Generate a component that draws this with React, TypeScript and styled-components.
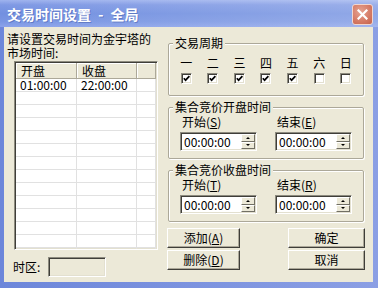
import React from 'react';
import styled, { createGlobalStyle } from 'styled-components';

const GlobalStyle = createGlobalStyle`
  html, body { margin: 0; padding: 0; }
  body {
    font-family: "Noto Sans CJK SC", "Noto Sans", sans-serif;
    font-size: 12px;
    color: #000;
    background: #7f95dc;
  }
  * { box-sizing: border-box; }
`;

const Window = styled.div`
  width: 378px;
  height: 288px;
  display: flex;
  flex-direction: column;
  overflow: hidden;
  background: linear-gradient(to right, #6c86da, #8b9fe4);
`;

const TitleBar = styled.div`
  height: 27px;
  flex: none;
  display: flex;
  align-items: center;
  justify-content: space-between;
  padding: 0 5px 0 7px;
  background:
    linear-gradient(to right, rgba(255, 255, 255, 0) 0%, rgba(255, 255, 255, 0.22) 100%),
    linear-gradient(to bottom, #9fb3ee 0%, #7f99e4 18%, #7290e0 50%, #7a96e3 80%, #8ba3ea 100%);
`;

const Title = styled.span`
  color: #fff;
  font-size: 14px;
  font-weight: 700;
  line-height: 16px;
  word-spacing: 4px;
  text-shadow: 1px 1px 0 rgba(40, 60, 140, 0.35);
`;

const CloseButton = styled.div`
  width: 21px;
  height: 21px;
  margin-top: 2px;
  border-radius: 3px;
  border: 1px solid #f1d6cf;
  background: radial-gradient(circle at 40% 35%, #e6a493 0%, #d57a65 60%, #c4624c 100%);
  display: flex;
  align-items: center;
  justify-content: center;
`;

const Body = styled.div`
  flex: 1;
  margin: 0 5px 6px 4px;
  background: #ece9d8;
  display: flex;
`;

const LeftPane = styled.div`
  width: 163px;
  flex: none;
  padding: 5px 0 0 3px;
  display: flex;
  flex-direction: column;
`;

const Prompt = styled.div`
  line-height: 14px;
  white-space: nowrap;
`;

const ListView = styled.div`
  margin: 1px 0 0 7px;
  width: 144px;
  height: 189px;
  padding: 1px;
  border: 1px solid;
  border-color: #8d8b7f #fff #fff #8d8b7f;
  box-shadow: inset 1px 1px 0 #3f3e39, inset -1px -1px 0 #e3e0d0;
  background: #fff;
  display: flex;
  flex-direction: column;
  overflow: hidden;
`;

const HeaderRow = styled.div`
  display: flex;
  height: 16px;
  flex: none;
  background: #ece9d8;
`;

const HeaderCell = styled.div<{ $w?: number }>`
  ${(p) => (p.$w ? `width: ${p.$w}px; flex: none;` : 'flex: 1;')}
  padding-left: 5px;
  line-height: 15px;
  border-right: 1px solid #aca899;
  border-bottom: 1px solid #aca899;
  box-shadow: inset 1px 1px 0 #fff;
`;

const Row = styled.div`
  display: flex;
  height: 13px;
  flex: none;
  border-bottom: 1px solid #e1e1e1;
`;

const Cell = styled.div<{ $w?: number }>`
  ${(p) => (p.$w ? `width: ${p.$w}px; flex: none;` : 'flex: 1;')}
  padding-left: 4px;
  line-height: 12px;
  border-right: 1px solid #e1e1e1;
  white-space: nowrap;
`;

const ZoneRow = styled.div`
  display: flex;
  align-items: center;
  margin: 7px 0 0 6px;
  gap: 8px;
`;

const ZoneLabel = styled.span`
  line-height: 14px;
`;

const ZoneInput = styled.div`
  width: 58px;
  height: 20px;
  border: 1px solid;
  border-color: #8d8b7f #fff #fff #8d8b7f;
  box-shadow: inset 1px 1px 0 #3f3e39, inset -1px -1px 0 #e3e0d0;
  background: #ece9d8;
`;

const RightPane = styled.div`
  flex: 1;
  padding-top: 10px;
  display: flex;
  flex-direction: column;
  gap: 5px;
`;

const Group = styled.fieldset<{ $pt: number; $pb: number }>`
  margin: 0 0 0 1px;
  width: 196px;
  min-width: 0;
  padding: ${(p) => p.$pt}px 4px ${(p) => p.$pb}px;
  border: 1px solid #aca899;
  border-radius: 2px;
  box-shadow: inset 1px 1px 0 #fff, 1px 1px 0 #fff;
`;

const Legend = styled.legend`
  padding: 0 2px;
  margin: 0;
  font-size: 12px;
  line-height: 12px;
  background: #ece9d8;
`;

const DaysGrid = styled.div`
  display: grid;
  grid-template-columns: repeat(7, 1fr);
`;

const Day = styled.div`
  display: flex;
  flex-direction: column;
  align-items: center;
  gap: 3px;
`;

const DayLabel = styled.span`
  line-height: 14px;
`;

const CheckBox = styled.div`
  width: 11px;
  height: 11px;
  border: 1px solid;
  border-color: #8d8b7f #fff #fff #8d8b7f;
  box-shadow: inset 1px 1px 0 #3f3e39, inset -1px -1px 0 #e3e0d0;
  background: #fff;
  display: flex;
  align-items: center;
  justify-content: center;
`;

const TimeRow = styled.div`
  display: grid;
  grid-template-columns: 77px 77px;
  column-gap: 18px;
  padding-left: 7px;
`;

const TimeCol = styled.div`
  display: flex;
  flex-direction: column;
  gap: 3px;
`;

const FieldLabel = styled.span`
  padding-left: 2px;
  line-height: 14px;
  white-space: nowrap;
`;

const TimeInput = styled.div`
  height: 19px;
  display: flex;
  padding: 1px;
  border: 1px solid;
  border-color: #8d8b7f #fff #fff #8d8b7f;
  box-shadow: inset 1px 1px 0 #3f3e39, inset -1px -1px 0 #e3e0d0;
  background: #fff;
`;

const TimeText = styled.span`
  flex: 1;
  padding-left: 2px;
  line-height: 15px;
`;

const Spinner = styled.div`
  width: 14px;
  display: flex;
  flex-direction: column;
`;

const SpinButton = styled.div<{ $down?: boolean }>`
  flex: 1;
  background: #ece9d8;
  border: 1px solid;
  border-color: #fff #716f64 #716f64 #fff;
  display: flex;
  align-items: center;
  justify-content: center;
  &::after {
    content: '';
    width: 0;
    height: 0;
    border-left: 2px solid transparent;
    border-right: 2px solid transparent;
    ${(p) => (p.$down ? 'border-top: 2px solid #000;' : 'border-bottom: 2px solid #000;')}
  }
`;

const ButtonGrid = styled.div`
  margin-top: 1px;
  display: grid;
  grid-template-columns: 73px 77px;
  justify-content: space-between;
  width: 198px;
  row-gap: 2px;
`;

const Button = styled.div`
  height: 20px;
  display: flex;
  align-items: center;
  justify-content: center;
  background: #ece9d8;
  border: 1px solid;
  border-color: #fff #3f3e39 #3f3e39 #fff;
  box-shadow: inset -1px -1px 0 #aca899;
  line-height: 14px;
  white-space: nowrap;
`;

const Mnemonic = styled.u`
  text-decoration: underline;
  text-underline-offset: 1px;
`;

const days: { label: string; checked: boolean }[] = [
  { label: '一', checked: true },
  { label: '二', checked: true },
  { label: '三', checked: true },
  { label: '四', checked: true },
  { label: '五', checked: true },
  { label: '六', checked: false },
  { label: '日', checked: false },
];

const CheckMark = () => (
  <svg width="7" height="7" viewBox="0 0 7 7">
    <polyline points="0.8,3.2 2.6,5.2 6.4,1.2" fill="none" stroke="#000" strokeWidth="1.7" />
  </svg>
);

const TimeField = ({ label, hot }: { label: string; hot: string }) => (
  <TimeCol>
    <FieldLabel>
      {label}(<Mnemonic>{hot}</Mnemonic>)
    </FieldLabel>
    <TimeInput>
      <TimeText>00:00:00</TimeText>
      <Spinner>
        <SpinButton />
        <SpinButton $down />
      </Spinner>
    </TimeInput>
  </TimeCol>
);

const emptyRows = Array.from({ length: 13 }, (_, i) => i);

export default function App() {
  return (
    <>
      <GlobalStyle />
      <Window>
        <TitleBar>
          <Title>交易时间设置 - 全局</Title>
          <CloseButton>
            <svg width="11" height="11" viewBox="0 0 11 11">
              <path d="M1.5 1.5 L9.5 9.5 M9.5 1.5 L1.5 9.5" stroke="#fff" strokeWidth="2.2" strokeLinecap="square" />
            </svg>
          </CloseButton>
        </TitleBar>
        <Body>
          <LeftPane>
            <Prompt>
              请设置交易时间为金宇塔的
              <br />
              市场时间:
            </Prompt>
            <ListView>
              <HeaderRow>
                <HeaderCell $w={61}>开盘</HeaderCell>
                <HeaderCell $w={60}>收盘</HeaderCell>
                <HeaderCell />
              </HeaderRow>
              <Row>
                <Cell $w={61}>01:00:00</Cell>
                <Cell $w={60}>22:00:00</Cell>
                <Cell />
              </Row>
              {emptyRows.map((i) => (
                <Row key={i}>
                  <Cell $w={61} />
                  <Cell $w={60} />
                  <Cell />
                </Row>
              ))}
            </ListView>
            <ZoneRow>
              <ZoneLabel>时区:</ZoneLabel>
              <ZoneInput />
            </ZoneRow>
          </LeftPane>
          <RightPane>
            <Group $pt={7} $pb={11}>
              <Legend>交易周期</Legend>
              <DaysGrid>
                {days.map((d) => (
                  <Day key={d.label}>
                    <DayLabel>{d.label}</DayLabel>
                    <CheckBox>{d.checked && <CheckMark />}</CheckBox>
                  </Day>
                ))}
              </DaysGrid>
            </Group>
            <Group $pt={2} $pb={7}>
              <Legend>集合竞价开盘时间</Legend>
              <TimeRow>
                <TimeField label="开始" hot="S" />
                <TimeField label="结束" hot="E" />
              </TimeRow>
            </Group>
            <Group $pt={2} $pb={7}>
              <Legend>集合竞价收盘时间</Legend>
              <TimeRow>
                <TimeField label="开始" hot="T" />
                <TimeField label="结束" hot="R" />
              </TimeRow>
            </Group>
            <ButtonGrid>
              <Button>
                添加(<Mnemonic>A</Mnemonic>)
              </Button>
              <Button>确定</Button>
              <Button>
                删除(<Mnemonic>D</Mnemonic>)
              </Button>
              <Button>取消</Button>
            </ButtonGrid>
          </RightPane>
        </Body>
      </Window>
    </>
  );
}
